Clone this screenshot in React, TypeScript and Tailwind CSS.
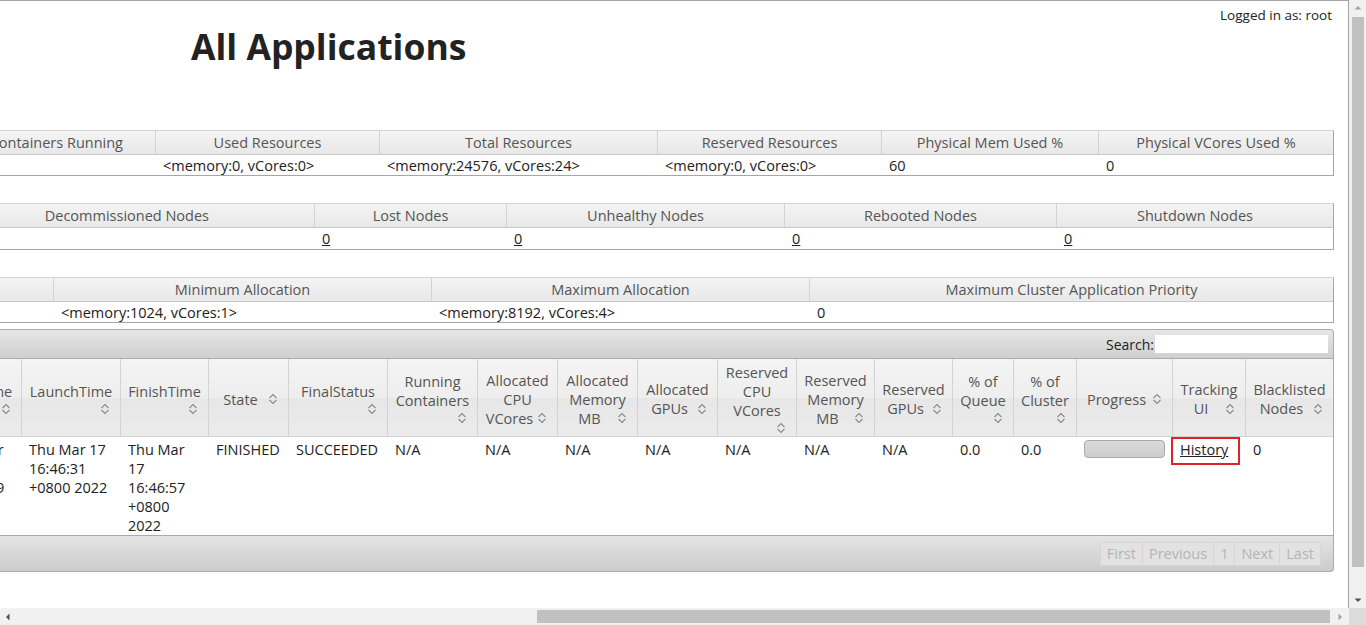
import type { ReactNode } from "react";

const SortIcon = () => (
  <svg width="16" height="16" viewBox="0 0 16 16" className="shrink-0">
    <path d="M4.5 7 L8 3.5 L11.5 7" fill="none" stroke="#8a8a8a" strokeWidth="1.1" />
    <path d="M4.5 9 L8 12.5 L11.5 9" fill="none" stroke="#8a8a8a" strokeWidth="1.1" />
  </svg>
);

const HeadText = ({ lines, own }: { lines: string[]; own?: boolean }) => (
  <div className="w-full leading-[19px]">
    {lines.map((l, i) =>
      i === lines.length - 1 && !own ? (
        <div key={i} className="flex items-center">
          <span className="flex-1 text-center whitespace-nowrap">{l}</span>
          <SortIcon />
        </div>
      ) : (
        <div key={i} className="text-center whitespace-nowrap">
          {l}
        </div>
      )
    )}
    {own && (
      <div className="flex justify-end h-4">
        <SortIcon />
      </div>
    )}
  </div>
);

const heads: { lines: string[]; own?: boolean }[] = [
  { lines: ["LaunchTime"], own: true },
  { lines: ["FinishTime"], own: true },
  { lines: ["State"] },
  { lines: ["FinalStatus"], own: true },
  { lines: ["Running", "Containers"], own: true },
  { lines: ["Allocated", "CPU", "VCores"] },
  { lines: ["Allocated", "Memory", "MB"] },
  { lines: ["Allocated", "GPUs"] },
  { lines: ["Reserved", "CPU", "VCores"], own: true },
  { lines: ["Reserved", "Memory", "MB"] },
  { lines: ["Reserved", "GPUs"] },
  { lines: ["% of", "Queue"], own: true },
  { lines: ["% of", "Cluster"], own: true },
  { lines: ["Progress"] },
  { lines: ["Tracking", "UI"] },
  { lines: ["Blacklisted", "Nodes"] },
];

const Lines = ({ lines }: { lines: string[] }) => (
  <>
    {lines.map((l, i) => (
      <div key={i} className="whitespace-nowrap">
        {l}
      </div>
    ))}
  </>
);

const Td = ({ children }: { children?: ReactNode }) => (
  <div className="px-[7px] pt-[3px] leading-[19px] text-[#222]">{children}</div>
);

const MHead = ({ children, className = "" }: { children?: ReactNode; className?: string }) => (
  <div
    className={
      "flex items-center border-r border-[#d3d3d3] last:border-r-0 text-[#555] whitespace-nowrap overflow-hidden " +
      (className || "justify-center")
    }
  >
    {children}
  </div>
);

const MBody = ({ children }: { children?: ReactNode }) => (
  <div className="flex items-center pl-[7px] text-[#222] whitespace-nowrap">{children}</div>
);

const metricHead =
  "grid h-[24px] border-b border-[#c8c8c8] bg-[linear-gradient(to_bottom,#f4f4f4,#e8e8e8)]";

const Link0 = () => <span className="underline">0</span>;

const Triangle = ({ dir, color }: { dir: "up" | "down" | "left" | "right"; color: string }) => {
  const d = {
    up: "M0.5 4.5 L4 1 L7.5 4.5Z",
    down: "M0.5 2.5 L4 6 L7.5 2.5Z",
    left: "M4.5 0.5 L1 4 L4.5 7.5Z",
    right: "M2.5 0.5 L6 4 L2.5 7.5Z",
  }[dir];
  return (
    <svg width="8" height="8" viewBox="0 0 8 8">
      <path d={d} fill={color} />
    </svg>
  );
};

export default function App() {
  return (
    <div className="w-[1366px] h-[625px] overflow-hidden flex flex-col bg-white font-['Open_Sans',sans-serif] text-[14.5px]">
      <div className="flex h-[608px]">
        <main className="w-[1349px] h-[608px] overflow-hidden border-t border-r border-[#a6a6a6]">
          <div className="pt-[5px] pr-[16px] leading-[18px] text-[13.5px] text-[#222] text-right">
            Logged in as: root
          </div>
          <h1 className="mt-[1px] pl-[191px] text-[35.5px] font-bold leading-[43px] text-[#222]">
            All Applications
          </h1>

          {/* cluster metrics */}
          <div className="mt-[62px] w-[1334px] border-t border-r border-b border-t-[#d3d3d3] border-r-[#a6a6a6] border-b-[#a6a6a6]">
            <div className={metricHead + " grid-cols-[156px_224px_278px_224px_217px_234px]"}>
              <MHead className="justify-end pr-[32px]">Containers Running</MHead>
              <MHead>Used Resources</MHead>
              <MHead>Total Resources</MHead>
              <MHead>Reserved Resources</MHead>
              <MHead>Physical Mem Used %</MHead>
              <MHead>Physical VCores Used %</MHead>
            </div>
            <div className="grid h-[20px] grid-cols-[156px_224px_278px_224px_217px_234px]">
              <MBody />
              <MBody>&lt;memory:0, vCores:0&gt;</MBody>
              <MBody>&lt;memory:24576, vCores:24&gt;</MBody>
              <MBody>&lt;memory:0, vCores:0&gt;</MBody>
              <MBody>60</MBody>
              <MBody>0</MBody>
            </div>
          </div>

          {/* node metrics */}
          <div className="mt-[27px] w-[1334px] border-t border-r border-b border-t-[#d3d3d3] border-r-[#a6a6a6] border-b-[#a6a6a6]">
            <div className={metricHead + " grid-cols-[315px_192px_278px_272px_276px]"}>
              <MHead className="justify-end pr-[105px]">Decommissioned Nodes</MHead>
              <MHead>Lost Nodes</MHead>
              <MHead>Unhealthy Nodes</MHead>
              <MHead>Rebooted Nodes</MHead>
              <MHead>Shutdown Nodes</MHead>
            </div>
            <div className="grid h-[21px] grid-cols-[315px_192px_278px_272px_276px]">
              <MBody />
              <MBody>
                <Link0 />
              </MBody>
              <MBody>
                <Link0 />
              </MBody>
              <MBody>
                <Link0 />
              </MBody>
              <MBody>
                <Link0 />
              </MBody>
            </div>
          </div>

          {/* scheduler metrics */}
          <div className="mt-[27px] w-[1334px] border-t border-r border-b border-t-[#d3d3d3] border-r-[#a6a6a6] border-b-[#a6a6a6]">
            <div className={metricHead + " grid-cols-[54px_378px_378px_523px]"}>
              <MHead />
              <MHead>Minimum Allocation</MHead>
              <MHead>Maximum Allocation</MHead>
              <MHead>Maximum Cluster Application Priority</MHead>
            </div>
            <div className="grid h-[20px] grid-cols-[54px_378px_378px_523px]">
              <MBody />
              <MBody>&lt;memory:1024, vCores:1&gt;</MBody>
              <MBody>&lt;memory:8192, vCores:4&gt;</MBody>
              <MBody>0</MBody>
            </div>
          </div>

          {/* applications table */}
          <div className="mt-[6px] w-[1334px]">
            <div className="h-[30px] flex items-center justify-end pr-[5px] border-t border-b border-r border-[#aaa] rounded-tr-[4px] bg-[linear-gradient(to_bottom,#e6e6e6,#cfcfcf)]">
              <label className="flex items-center text-[14px] text-[#222]">
                Search:
                <input className="ml-[1px] w-[173px] h-[18px] bg-white outline-none" />
              </label>
            </div>
            <div className="border-r border-[#aaa]">
              <div className="grid h-[78px] border-b border-[#d3d3d3] text-[#555] grid-cols-[22px_99px_88px_80px_99px_90px_80px_80px_80px_79px_78px_78px_61px_63px_96px_73px_87px] bg-[linear-gradient(to_bottom,#f4f4f4_0%,#eeeeee_50%,#e7e7e7_52%,#ebebeb_100%)]">
                <div className="flex items-center pt-[3px] overflow-hidden border-r border-[#d3d3d3]">
                  <div className="w-[83px] -ml-[62px] shrink-0 px-[7px]">
                    <HeadText lines={["StartTime"]} own />
                  </div>
                </div>
                {heads.map((h, i) => (
                  <div
                    key={i}
                    className="flex items-center px-[7px] pt-[3px] border-r border-[#d3d3d3] last:border-r-0"
                  >
                    <HeadText lines={h.lines} own={h.own} />
                  </div>
                ))}
              </div>
              <div className="grid h-[98px] bg-white grid-cols-[22px_99px_88px_80px_99px_90px_80px_80px_80px_79px_78px_78px_61px_63px_96px_73px_87px]">
                <div className="overflow-hidden">
                  <div className="w-[83px] -ml-[60px] pl-[7px] pt-[3px] leading-[19px] text-[#222]">
                    <Lines lines={["Thu Mar", "17", "16:46:29", "+0800", "2022"]} />
                  </div>
                </div>
                <Td>
                  <Lines lines={["Thu Mar 17", "16:46:31", "+0800 2022"]} />
                </Td>
                <Td>
                  <Lines lines={["Thu Mar", "17", "16:46:57", "+0800", "2022"]} />
                </Td>
                <Td>FINISHED</Td>
                <Td>SUCCEEDED</Td>
                <Td>N/A</Td>
                <Td>N/A</Td>
                <Td>N/A</Td>
                <Td>N/A</Td>
                <Td>N/A</Td>
                <Td>N/A</Td>
                <Td>N/A</Td>
                <Td>0.0</Td>
                <Td>0.0</Td>
                <Td>
                  <div className="w-[81px] h-[18px] rounded-[4px] border border-[#a9a9a9] bg-[linear-gradient(to_bottom,#dadada,#cdcdcd)]" />
                </Td>
                <div>
                  <div className="-ml-[2px] w-[69px] h-[28px] border-2 border-[#e0202a] pl-[7px] pt-[1px] leading-[19px] text-[#222]">
                    <span className="underline">History</span>
                  </div>
                </div>
                <Td>0</Td>
              </div>
            </div>
            <div className="h-[37px] flex items-center justify-end pr-[12px] border-t border-b border-r border-[#aaa] rounded-br-[4px] bg-[linear-gradient(to_bottom,#e4e4e4,#cccccc)]">
              <div className="flex h-[24px] text-[#b4b4b4]">
                {["First", "Previous", "1", "Next", "Last"].map((p) => (
                  <span
                    key={p}
                    className="flex items-center px-[6px] -ml-px border border-[#d6d6d6] bg-[#e2e2e2]"
                  >
                    {p}
                  </span>
                ))}
              </div>
            </div>
          </div>
        </main>

        {/* vertical scrollbar */}
        <div className="w-[17px] h-[608px] bg-[#f1f1f1] flex flex-col items-center">
          <div className="h-[17px] flex items-center justify-center">
            <Triangle dir="up" color="#a3a3a3" />
          </div>
          <div className="w-[12px] h-[550px] bg-[#c1c1c1]" />
          <div className="flex-1" />
          <div className="h-[17px] flex items-center justify-center">
            <Triangle dir="down" color="#505050" />
          </div>
        </div>
      </div>

      {/* horizontal scrollbar */}
      <div className="h-[17px] flex bg-[#f1f1f1]">
        <div className="w-[17px] flex items-center justify-center">
          <Triangle dir="left" color="#505050" />
        </div>
        <div className="w-[520px]" />
        <div className="w-[793px] h-[13px] self-center bg-[#c1c1c1]" />
        <div className="w-[19px] flex items-center justify-center">
          <Triangle dir="right" color="#a3a3a3" />
        </div>
        <div className="w-[17px] bg-[#dcdcdc]" />
      </div>
    </div>
  );
}
